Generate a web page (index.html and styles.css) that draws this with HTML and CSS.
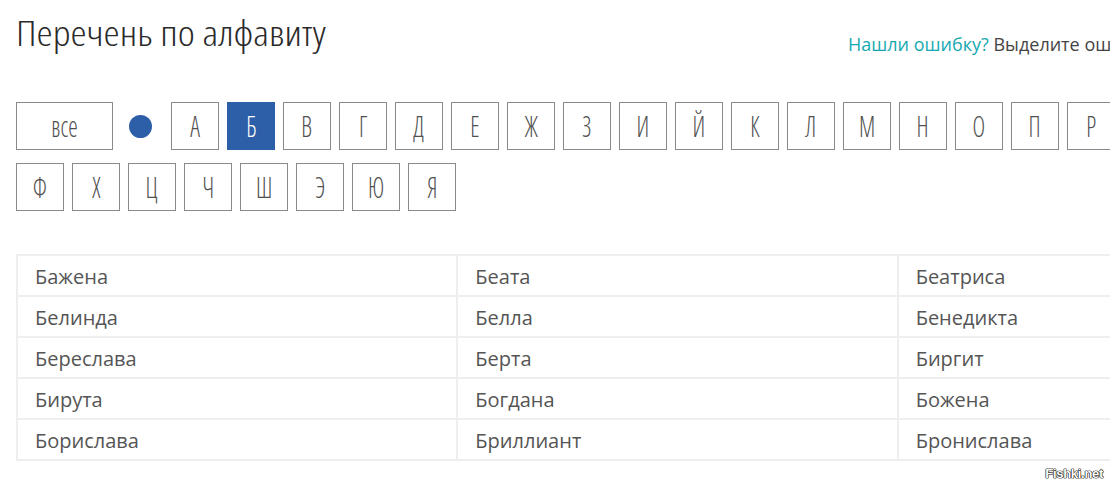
FILE: index.html
```html
<!DOCTYPE html>
<html lang="ru">
<head>
<meta charset="utf-8">
<title>Перечень по алфавиту</title>
<link rel="stylesheet" href="styles.css">
</head>
<body>
<div class="page">
  <header class="head">
    <h1 class="title"><span class="cond">Перечень по алфавиту</span></h1>
    <p class="note"><span class="teal">Нашли ошибку?</span> Выделите ошибку и нажмите Ctrl+Enter</p>
  </header>

  <nav class="abc">
    <a class="key wide"><span class="cond">все</span></a>
    <span class="dot"></span>
    <a class="key"><span class="cond">А</span></a>
    <a class="key active"><span class="cond">Б</span></a>
    <a class="key"><span class="cond">В</span></a>
    <a class="key"><span class="cond">Г</span></a>
    <a class="key"><span class="cond">Д</span></a>
    <a class="key"><span class="cond">Е</span></a>
    <a class="key"><span class="cond">Ж</span></a>
    <a class="key"><span class="cond">З</span></a>
    <a class="key"><span class="cond">И</span></a>
    <a class="key"><span class="cond">Й</span></a>
    <a class="key"><span class="cond">К</span></a>
    <a class="key"><span class="cond">Л</span></a>
    <a class="key"><span class="cond">М</span></a>
    <a class="key"><span class="cond">Н</span></a>
    <a class="key"><span class="cond">О</span></a>
    <a class="key"><span class="cond">П</span></a>
    <a class="key"><span class="cond">Р</span></a>
    <a class="key"><span class="cond">С</span></a>
    <a class="key"><span class="cond">Т</span></a>
    <a class="key"><span class="cond">У</span></a>
    <a class="key"><span class="cond">Ф</span></a>
    <a class="key"><span class="cond">Х</span></a>
    <a class="key"><span class="cond">Ц</span></a>
    <a class="key"><span class="cond">Ч</span></a>
    <a class="key"><span class="cond">Ш</span></a>
    <a class="key"><span class="cond">Э</span></a>
    <a class="key"><span class="cond">Ю</span></a>
    <a class="key"><span class="cond">Я</span></a>
  </nav>

  <table class="names">
    <tr><td>Бажена</td><td>Беата</td><td>Беатриса</td></tr>
    <tr><td>Белинда</td><td>Белла</td><td>Бенедикта</td></tr>
    <tr><td>Береслава</td><td>Берта</td><td>Биргит</td></tr>
    <tr><td>Бирута</td><td>Богдана</td><td>Божена</td></tr>
    <tr><td>Борислава</td><td>Бриллиант</td><td>Бронислава</td></tr>
  </table>
</div>
<div class="mark">Fishki.net</div>
</body>
</html>
```

FILE: styles.css
```css
html, body {
  margin: 0;
  padding: 0;
  background: #fff;
  overflow: hidden;
}
body {
  width: 1110px;
  height: 489px;
  position: relative;
  font-family: "Open Sans", "Liberation Sans", sans-serif;
  color: #444;
}
.page {
  width: 1340px;
  padding-left: 16px;
}
.cond {
  display: inline-block;
  font-family: "Open Sans", "Liberation Sans", sans-serif;
  font-weight: 300;
  font-stretch: 75%;
}
.head {
  display: grid;
  grid-template-columns: 832px auto;
  align-items: start;
  height: 102px;
}
.title {
  margin: 0;
  padding-top: 7px;
  font-size: 34px;
  font-weight: 300;
  line-height: 52px;
  color: #2a2a2a;
}
.title .cond {
  white-space: nowrap;
  transform: scaleX(1.2);
  transform-origin: left center;
}
.note {
  margin: 0;
  padding-top: 33px;
  font-size: 18px;
  line-height: 22px;
  white-space: nowrap;
  color: #444;
}
.teal { color: #17a9b1; }
.abc {
  width: 1300px;
  display: flex;
  flex-wrap: wrap;
  column-gap: 8px;
  row-gap: 13px;
  align-items: center;
}
.key {
  box-sizing: border-box;
  width: 48px;
  height: 48px;
  border: 1px solid #8a8a8a;
  display: flex;
  align-items: center;
  justify-content: center;
  font-size: 30px;
  color: #505050;
  line-height: 1;
}
.key .cond {
  transform: scaleX(0.8);
}
.key.wide {
  width: 97px;
}
.key.active {
  background: #2c5fa8;
  border-color: #2c5fa8;
  color: #fff;
}
.dot {
  width: 23px;
  height: 23px;
  border-radius: 50%;
  background: #2c5fa8;
  margin-left: 8px;
  margin-right: 11px;
}
.names {
  margin-top: 43px;
  width: 1323px;
  border-collapse: collapse;
  table-layout: fixed;
  font-size: 20px;
  color: #555;
}
.names td {
  border: 2px solid #eeeeee;
  height: 37px;
  padding: 2px 0 0 17px;
  line-height: 24px;
  vertical-align: middle;
}
.mark {
  position: absolute;
  right: 7px;
  bottom: 8px;
  font-family: "Liberation Sans", Arial, sans-serif;
  font-weight: bold;
  font-size: 13px;
  letter-spacing: -0.3px;
  color: #fff;
  -webkit-text-stroke: 0.6px #000;
  paint-order: stroke fill;
  text-shadow: 0 0 1px #000, 0 0 1px #000;
}
```
